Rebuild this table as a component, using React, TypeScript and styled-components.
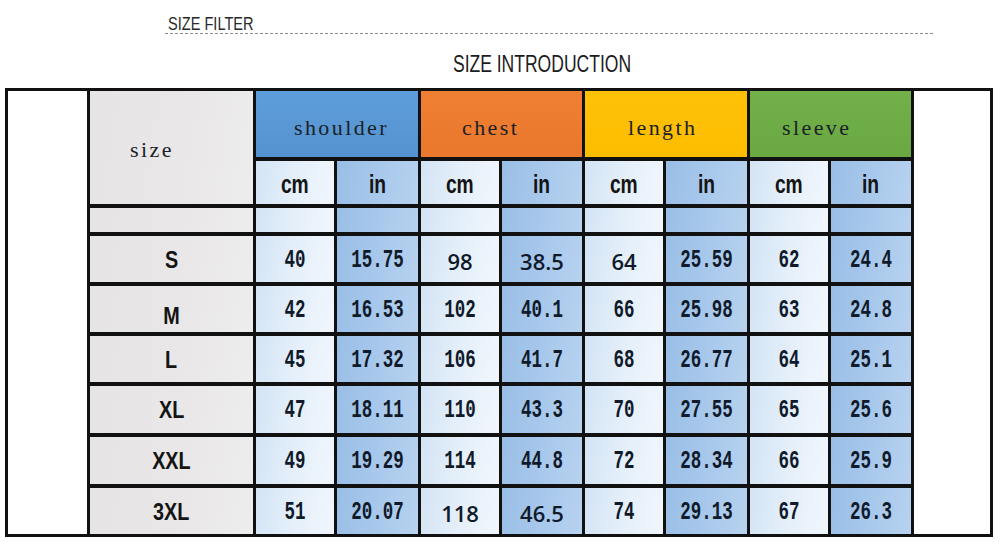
import styled, { createGlobalStyle } from "styled-components"

const GlobalStyle = createGlobalStyle`
  html, body {
    margin: 0;
    padding: 0;
    background: #ffffff;
  }
  body {
    font-family: "Liberation Sans", Arial, sans-serif;
  }
`

type Measure = {
    name: string
    color: string
    pad: number
}

const measures: Measure[] = [
    { name: "shoulder", color: "linear-gradient(180deg, #5d9dd9, #5593d0)", pad: 38 },
    { name: "chest", color: "linear-gradient(180deg, #ef7f33, #e9782d)", pad: 41 },
    { name: "length", color: "linear-gradient(180deg, #ffc107, #fcbd00)", pad: 43 },
    { name: "sleeve", color: "linear-gradient(180deg, #72b04a, #6aa842)", pad: 32 },
]

// "*" marks values typed in the plain sans font in the original chart
const rows: { label: string; drop?: boolean; values: string[] }[] = [
    { label: "S", values: ["40", "15.75", "98*", "38.5*", "64*", "25.59", "62", "24.4"] },
    { label: "M", drop: true, values: ["42", "16.53", "102", "40.1", "66", "25.98", "63", "24.8"] },
    { label: "L", values: ["45", "17.32", "106", "41.7", "68", "26.77", "64", "25.1"] },
    { label: "XL", values: ["47", "18.11", "110", "43.3", "70", "27.55", "65", "25.6"] },
    { label: "XXL", values: ["49", "19.29", "114", "44.8", "72", "28.34", "66", "25.9"] },
    { label: "3XL", values: ["51", "20.07", "118*", "46.5*", "74", "29.13", "67", "26.3"] },
]

const CM_BG = "linear-gradient(100deg, #d3e4f5 0%, #e6f0fa 55%, #f1f6fc 100%)"
const IN_BG = "linear-gradient(100deg, #99bee6 0%, #a9c9ec 55%, #b8d2ef 100%)"
const GRAY_BG = "linear-gradient(100deg, #e6e4e4 0%, #e9e7e7 60%, #eeeded 100%)"

const App = () => {
    return (
        <>
            <GlobalStyle />
            <Page>
                <FilterBar>
                    <FilterText>SIZE FILTER</FilterText>
                </FilterBar>
                <TitleRow>
                    <TitleText>SIZE INTRODUCTION</TitleText>
                </TitleRow>
                <Frame>
                    <SideColumn />
                    <Chart>
                        <SizeHead>size</SizeHead>
                        {measures.map((m) => (
                            <GroupHead key={m.name} $bg={m.color} $pad={m.pad}>
                                {m.name}
                            </GroupHead>
                        ))}
                        {measures.map((m) => [
                            <Cell key={m.name + "cm"} $bg={CM_BG}>
                                <Unit>cm</Unit>
                            </Cell>,
                            <Cell key={m.name + "in"} $bg={IN_BG}>
                                <Unit>in</Unit>
                            </Cell>,
                        ])}
                        <Cell $bg={GRAY_BG} />
                        {measures.map((m) => [
                            <Cell key={m.name + "b1"} $bg={CM_BG} />,
                            <Cell key={m.name + "b2"} $bg={IN_BG} />,
                        ])}
                        {rows.map((row) => [
                            <Cell key={row.label} $bg={GRAY_BG}>
                                <SizeLabel $drop={row.drop}>{row.label}</SizeLabel>
                            </Cell>,
                            ...row.values.map((v, i) => {
                                const sans = v.endsWith("*")
                                return (
                                    <Cell key={row.label + i} $bg={i % 2 === 0 ? CM_BG : IN_BG}>
                                        <Num $sans={sans}>{v.replace("*", "")}</Num>
                                    </Cell>
                                )
                            }),
                        ])}
                    </Chart>
                    <SideColumn $fill />
                </Frame>
            </Page>
        </>
    )
}

export default App

const Page = styled.div`
    width: 1000px;
    height: 542px;
    overflow: hidden;
    background: #ffffff;
`

const FilterBar = styled.div`
    margin-left: 165px;
    width: 768px;
    height: 34px;
    box-sizing: border-box;
    border-bottom: 1px dashed #8a8a8a;
    display: flex;
    align-items: flex-end;
`

const FilterText = styled.span`
    display: inline-block;
    margin-left: 3px;
    font-size: 18px;
    line-height: 1;
    color: #2a2a2a;
    transform: scaleX(0.81);
    transform-origin: left bottom;
`

const TitleRow = styled.div`
    height: 54px;
    display: flex;
    align-items: flex-start;
    justify-content: center;
    padding: 18px 0 0 84px;
    box-sizing: border-box;
`

const TitleText = styled.span`
    display: inline-block;
    font-size: 24px;
    line-height: 1;
    color: #1c1c1c;
    transform: scaleX(0.73);
`

const Frame = styled.div`
    margin-left: 5px;
    width: 988px;
    height: 449px;
    box-sizing: border-box;
    border: 3px solid #111111;
    display: flex;
    background: #111111;
`

const SideColumn = styled.div<{ $fill?: boolean }>`
    width: 79px;
    flex: ${(p) => (p.$fill ? "1" : "none")};
    background: #ffffff;
    margin: ${(p) => (p.$fill ? "0 0 0 3px" : "0 3px 0 0")};
`

const Chart = styled.div`
    display: grid;
    grid-template-columns: 163px 78px 81px 78px 80px 78px 81px 78px 80px;
    grid-template-rows: 66px 43px 24px 46px 46px 46px 47px 47px 46px;
    gap: 4px 3px;
    background: #111111;
`

const Cell = styled.div<{ $bg: string }>`
    background: ${(p) => p.$bg};
    display: flex;
    align-items: center;
    justify-content: center;
    overflow: hidden;
`

const SizeHead = styled.div`
    grid-row: span 2;
    background: ${GRAY_BG};
    display: flex;
    align-items: center;
    padding: 4px 0 0 40px;
    font-family: "Liberation Serif", "Times New Roman", serif;
    font-size: 22px;
    letter-spacing: 2.4px;
    color: #1b1f27;
`

const GroupHead = styled.div<{ $bg: string; $pad: number }>`
    grid-column: span 2;
    background: ${(p) => p.$bg};
    display: flex;
    align-items: center;
    padding: 8px 0 0 ${(p) => p.$pad}px;
    font-family: "Liberation Serif", "Times New Roman", serif;
    font-size: 22px;
    letter-spacing: 2.4px;
    color: #1b1f27;
`

const Unit = styled.span`
    display: inline-block;
    font-weight: 700;
    font-size: 26px;
    line-height: 1;
    color: #141414;
    transform: scaleX(0.74);
    margin-top: 2px;
`

const SizeLabel = styled.span<{ $drop?: boolean }>`
    display: inline-block;
    font-weight: 700;
    font-size: 23px;
    line-height: 1;
    color: #141414;
    transform: scaleX(0.86);
    margin-top: ${(p) => (p.$drop ? "14px" : "2px")};
`

const Num = styled.span<{ $sans?: boolean }>`
    display: inline-block;
    font-family: ${(p) =>
        p.$sans ? '"Open Sans", "Liberation Sans", sans-serif' : '"Liberation Mono", "Courier New", monospace'};
    font-weight: ${(p) => (p.$sans ? 600 : 700)};
    font-size: ${(p) => (p.$sans ? "22px" : "17.5px")};
    line-height: 1;
    color: #101a2a;
    transform: ${(p) => (p.$sans ? "none" : "scaleY(1.45)")};
    margin-top: 3px;
`
